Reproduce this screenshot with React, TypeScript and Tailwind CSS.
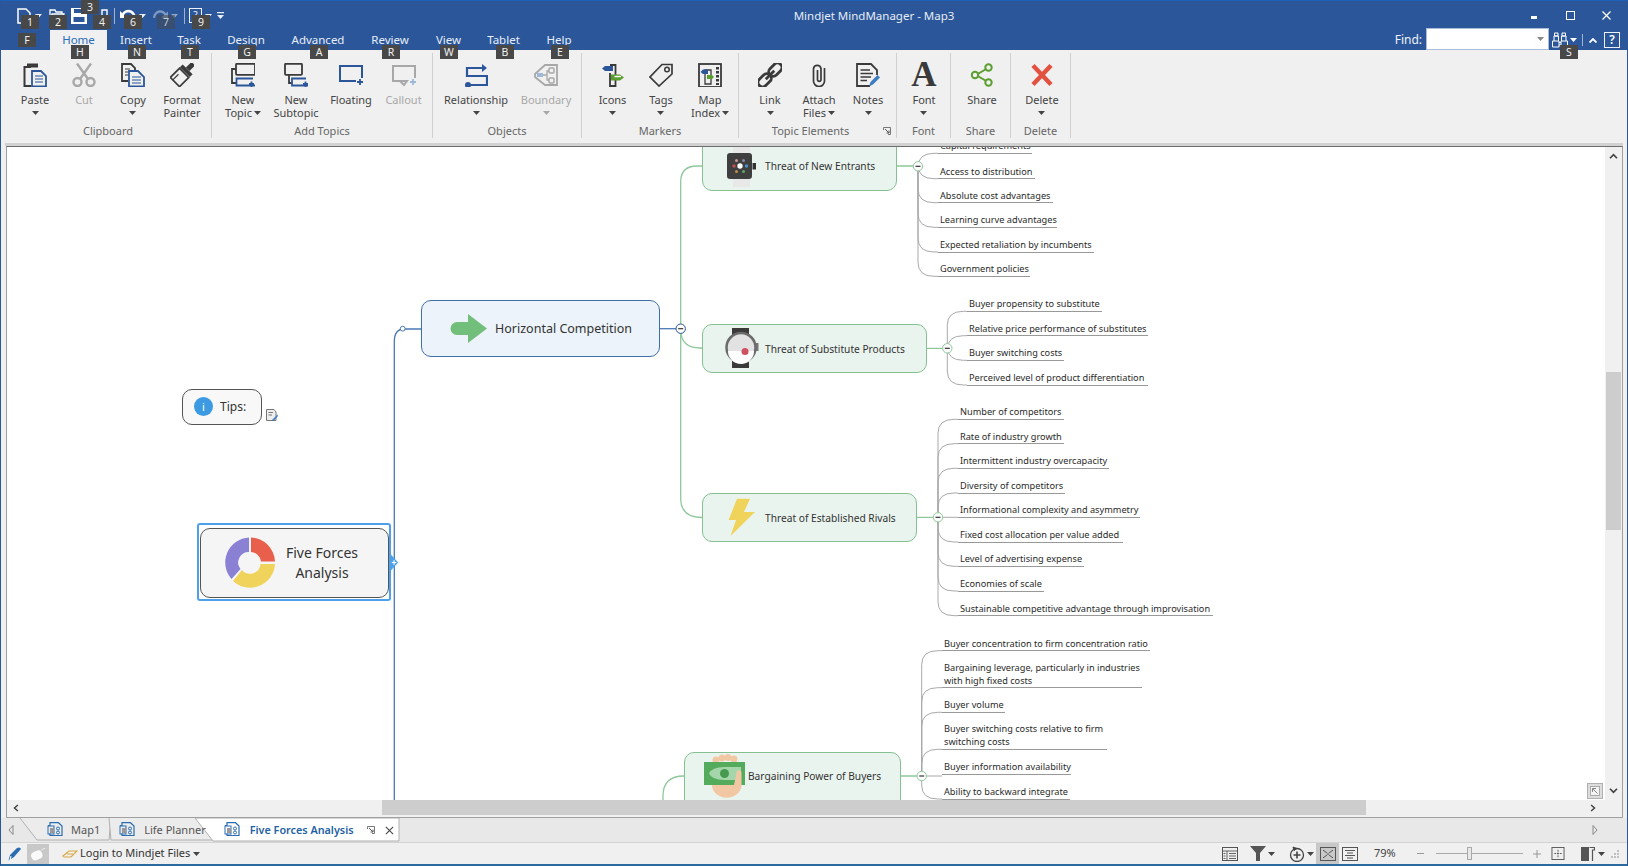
import React from "react";

const D = "#3a3a3a";
const B = "#2b579a";
const G = "#a8a8a8";

function Caret({ c = "#444", cls = "" }: { c?: string; cls?: string }) {
  return (
    <svg viewBox="0 0 7 4" className={"w-[7px] h-[4px] shrink-0 " + cls}>
      <polygon points="0,0 7,0 3.5,4" fill={c} />
    </svg>
  );
}

function Ic({ children, cls = "w-[24px] h-[24px]" }: { children: React.ReactNode; cls?: string }) {
  return (
    <svg viewBox="0 0 24 24" fill="none" className={cls}>
      {children}
    </svg>
  );
}

const icons: Record<string, React.ReactNode> = {
  paste: (
    <Ic>
      <path d="M8 4H1.5V23H8" stroke={D} strokeWidth="2" />
      <rect x="4" y="0.5" width="11" height="4" fill={D} />
      <path d="M9 8H18L23 13V23.5H9Z" stroke={B} strokeWidth="1.8" />
      <path d="M12 13H20M12 16H20M12 19H20" stroke={B} strokeWidth="1.2" />
    </Ic>
  ),
  cut: (
    <Ic>
      <circle cx="5.5" cy="19" r="4" stroke={G} strokeWidth="2.4" />
      <circle cx="18.5" cy="19" r="4" stroke={G} strokeWidth="2.4" />
      <path d="M8 16L19 0.5M16 16L5 0.5" stroke={G} strokeWidth="2.4" />
    </Ic>
  ),
  copy: (
    <Ic>
      <path d="M7 18H1V1H10L14 5V8" stroke={D} strokeWidth="1.8" />
      <path d="M4 6H9M4 9H7M4 12H7" stroke={D} strokeWidth="1.2" />
      <path d="M8 8H17L23 14V23.5H8Z" stroke={B} strokeWidth="1.8" />
      <path d="M11 14H20M11 17H20M11 20H20" stroke={B} strokeWidth="1.2" />
    </Ic>
  ),
  painter: (
    <Ic>
      <g transform="rotate(45 12 12)">
        <rect x="9.5" y="-4" width="5" height="8" fill={D} />
        <rect x="5" y="4" width="14" height="4" fill={D} />
        <rect x="5.5" y="9" width="13" height="13" stroke={D} strokeWidth="1.7" />
        <path d="M9 14V22" stroke={D} strokeWidth="1.2" />
      </g>
    </Ic>
  ),
  newTopic: (
    <Ic>
      <rect x="5" y="0.8" width="19" height="11" rx="1" stroke={D} strokeWidth="1.8" />
      <path d="M5 6H1V20H5" stroke={D} strokeWidth="1.8" />
      <path d="M24 22.5H5.5V15.5H22" stroke={B} strokeWidth="1.8" />
      <path d="M18 21H23M20.5 18.5V24" stroke={B} strokeWidth="1.8" />
    </Ic>
  ),
  newSub: (
    <Ic>
      <rect x="1" y="0.8" width="17" height="11" rx="1" stroke={D} strokeWidth="1.8" />
      <path d="M5 12V20H8" stroke={D} strokeWidth="1.8" />
      <path d="M24 22.5H8V15.5H22" stroke={B} strokeWidth="1.8" />
      <path d="M19 21H24M21.5 18.5V24" stroke={B} strokeWidth="1.8" />
    </Ic>
  ),
  floating: (
    <Ic>
      <path d="M23 15V3H1V18H17" stroke={B} strokeWidth="2" />
      <path d="M18 19H24M21 16V22" stroke={B} strokeWidth="1.8" />
    </Ic>
  ),
  callout: (
    <Ic>
      <path d="M23 15V3H1V18H15L12 22L8 18" stroke={G} strokeWidth="2" />
      <path d="M18 19H24M21 16V22" stroke="#9db8d8" strokeWidth="1.8" />
    </Ic>
  ),
  rel: (
    <Ic>
      <path d="M19 5H3V13H23V22H6" stroke={B} strokeWidth="2.2" />
      <path d="M18 1L23 5L18 9Z" fill={B} />
      <circle cx="4" cy="22" r="3" fill={B} />
    </Ic>
  ),
  boundary: (
    <Ic>
      <path d="M1 11L11 2H23V22H11L1 14Z" stroke={G} strokeWidth="1.8" />
      <rect x="15" y="5" width="5" height="5" rx="1" stroke={G} strokeWidth="1.5" />
      <rect x="15" y="15" width="5" height="5" rx="1" stroke={G} strokeWidth="1.5" />
      <rect x="3" y="10" width="6" height="4" fill="#9db8d8" />
      <path d="M9 12H13V8H15M13 12V17H15" stroke={G} strokeWidth="1.3" />
    </Ic>
  ),
  icons: (
    <Ic>
      <path d="M9 2H14.5V23H9V10" stroke={D} strokeWidth="1.8" />
      <path d="M1 5.5L4 3H12V8H4Z" fill={B} />
      <path d="M10 11.5H19L23 14.5L19 17.5H10Z" fill="#5a9e2f" />
      <path d="M13.5 13.5H20" stroke="#fff" strokeWidth="1.5" />
    </Ic>
  ),
  tags: (
    <Ic>
      <path d="M13 1.5H23V11L10 23L1 14Z" stroke={D} strokeWidth="1.7" />
      <circle cx="18" cy="6.5" r="2.3" stroke={D} strokeWidth="1.5" />
    </Ic>
  ),
  mapIndex: (
    <Ic>
      <rect x="1" y="1" width="22" height="23" stroke={D} strokeWidth="1.8" />
      <path d="M7 7H13V21H7Z" stroke={D} strokeWidth="1.3" />
      <path d="M2.5 9L5 6.5H10V11H5Z" fill={B} />
      <path d="M9 12H14L16 14L14 16H9Z" fill="#5a9e2f" />
      <path d="M19.5 4V22" stroke={D} strokeWidth="3" strokeDasharray="2.5 1.5" />
    </Ic>
  ),
  link: (
    <Ic>
      <g transform="rotate(-45 12 12)" stroke={D} strokeWidth="2.8">
        <rect x="-3" y="7.5" width="15" height="9" rx="4.5" />
        <rect x="12" y="7.5" width="15" height="9" rx="4.5" />
        <path d="M6 12H18" />
      </g>
    </Ic>
  ),
  attach: (
    <Ic>
      <path d="M17.5 5V18A5.5 5.5 0 0 1 6.5 18V5.5A3.8 3.8 0 0 1 14 5.5V17A1.8 1.8 0 0 1 10.5 17V7" stroke={D} strokeWidth="1.7" />
    </Ic>
  ),
  notes: (
    <Ic>
      <path d="M14 23H1V1H15L21 7V12" stroke={D} strokeWidth="1.8" />
      <path d="M4.5 7H14M4.5 10.5H17M4.5 14H15M4.5 17.5H11" stroke={D} strokeWidth="1.3" />
      <path d="M13 23.5L14.5 19L21.5 12L24 14.5L17 21.5Z" fill="#3f7cc0" />
    </Ic>
  ),
  share: (
    <Ic>
      <path d="M18 5L6 12L18 19" stroke="#5a9e2f" strokeWidth="2" />
      <circle cx="18.5" cy="4.5" r="3.2" fill="#f0f0f0" stroke="#5a9e2f" strokeWidth="2" />
      <circle cx="5" cy="12" r="3.2" fill="#f0f0f0" stroke="#5a9e2f" strokeWidth="2" />
      <circle cx="18.5" cy="19.5" r="3.2" fill="#f0f0f0" stroke="#5a9e2f" strokeWidth="2" />
    </Ic>
  ),
  del: (
    <Ic>
      <path d="M3 2.5L21 21.5M21 2.5L3 21.5" stroke="#e2513f" strokeWidth="4.4" />
    </Ic>
  ),
};

function RB({
  w,
  icon,
  lines,
  caret,
  off,
}: {
  w: string;
  icon: React.ReactNode;
  lines: string[];
  caret?: "below" | "inline";
  off?: boolean;
}) {
  const tc = off ? "text-[#a8a8a8]" : "text-[#444444]";
  return (
    <div className={"flex flex-col items-center " + w}>
      <div className="h-[26px] flex items-center justify-center">{icon}</div>
      <div className={"mt-[5px] text-center text-[11px] leading-[13px] whitespace-nowrap " + tc}>
        {lines.map((l, i) => (
          <div key={l} className="flex items-center justify-center gap-[2px]">
            {l}
            {caret === "inline" && i === lines.length - 1 && <Caret c={off ? G : "#444"} />}
          </div>
        ))}
        {caret === "below" && (
          <div className="h-[14px] flex items-center justify-center">
            <Caret c={off ? G : "#444"} />
          </div>
        )}
      </div>
    </div>
  );
}

function Group({
  w,
  pl,
  label,
  children,
  labelCls = "",
  launcher,
}: {
  w: string;
  pl: string;
  label: string;
  children: React.ReactNode;
  labelCls?: string;
  launcher?: boolean;
}) {
  return (
    <div className={"relative h-[85px] flex flex-col border-r border-[#d0d0d0] shrink-0 " + w}>
      <div className={"flex flex-1 pt-[9px] " + pl}>{children}</div>
      <div className={"h-[14px] text-center text-[11px] leading-[14px] text-[#666666] " + labelCls}>{label}</div>
      {launcher && (
        <svg viewBox="0 0 8 8" className="absolute right-[5px] bottom-[3px] w-[8px] h-[8px]" fill="none">
          <path d="M0.5 3V0.5H7.5V7.5H5" stroke="#777" />
          <path d="M2 2L6 6M6 3.5V6H3.5" stroke="#555" />
        </svg>
      )}
    </div>
  );
}

const tabs: [string, string][] = [
  ["Home", "w-[57px]"],
  ["Insert", "w-[58px]"],
  ["Task", "w-[48px]"],
  ["Design", "w-[66px]"],
  ["Advanced", "w-[78px]"],
  ["Review", "w-[66px]"],
  ["View", "w-[51px]"],
  ["Tablet", "w-[59px]"],
  ["Help", "w-[52px]"],
];

const keytips: [string, string][] = [
  ["1", "left-[20px] top-[15px]"],
  ["2", "left-[48px] top-[15px]"],
  ["3", "left-[80px] top-[0px]"],
  ["4", "left-[92px] top-[15px]"],
  ["6", "left-[123px] top-[15px]"],
  ["9", "left-[191px] top-[15px]"],
  ["F", "left-[17px] top-[33px]"],
  ["H", "left-[70px] top-[45px]"],
  ["N", "left-[127px] top-[45px]"],
  ["T", "left-[180px] top-[45px]"],
  ["G", "left-[237px] top-[45px]"],
  ["A", "left-[309px] top-[45px]"],
  ["R", "left-[381px] top-[45px]"],
  ["W", "left-[439px] top-[45px]"],
  ["B", "left-[495px] top-[45px]"],
  ["E", "left-[550px] top-[45px]"],
  ["S", "left-[1559px] top-[45px]"],
];

type Leaf = [string, number, number, boolean?];
type Branch = { bx: number; cy: number; start: number; items: Leaf[] };

const branches: Branch[] = [
  {
    bx: 918,
    cy: 166,
    start: 938,
    items: [
      ["Capital requirements", 153.3, 1032],
      ["Access to distribution", 178.7, 1035],
      ["Absolute cost advantages", 202.7, 1053],
      ["Learning curve advantages", 227.3, 1057],
      ["Expected retaliation by incumbents", 252, 1094],
      ["Government policies", 276.3, 1030],
    ],
  },
  {
    bx: 947.3,
    cy: 348.3,
    start: 967,
    items: [
      ["Buyer propensity to substitute", 311.3, 1102],
      ["Relative price performance of substitutes", 335.7, 1148],
      ["Buyer switching costs", 360.3, 1064],
      ["Perceived level of product differentiation", 385, 1148],
    ],
  },
  {
    bx: 938,
    cy: 517.3,
    start: 958,
    items: [
      ["Number of competitors", 419.3, 1064],
      ["Rate of industry growth", 443.7, 1064],
      ["Intermittent industry overcapacity", 468.3, 1109],
      ["Diversity of competitors", 493, 1065],
      ["Informational complexity and asymmetry", 517.3, 1140],
      ["Fixed cost allocation per value added", 542, 1122.5],
      ["Level of advertising expense", 566.3, 1084],
      ["Economies of scale", 591, 1044],
      ["Sustainable competitive advantage through improvisation", 615.7, 1212.5],
    ],
  },
  {
    bx: 921.7,
    cy: 776,
    start: 942,
    items: [
      ["Buyer concentration to firm concentration ratio", 650.7, 1150],
      ["Bargaining leverage, particularly in industries with high fixed costs", 687.7, 1142, true],
      ["Buyer volume", 712.3, 1005],
      ["Buyer switching costs relative to firm switching costs", 749.3, 1107, true],
      ["Buyer information availability", 774.3, 1071],
      ["Ability to backward integrate", 799, 1070],
    ],
  },
];

function branchPath(b: Branch, y: number) {
  const d = y - b.cy;
  if (Math.abs(d) < 4) return `M${b.bx} ${b.cy}H${b.start}`;
  const s = d < 0 ? 1 : -1;
  return `M${b.bx} ${b.cy}V${y + s * 14}Q${b.bx} ${y} ${b.bx + 16} ${y}H${b.start}`;
}

function Expander({ x, y, c }: { x: number; y: number; c: string }) {
  return (
    <g>
      <circle cx={x} cy={y} r="4.7" fill="#fff" stroke={c} strokeWidth="1" />
      <path d={`M${x - 2.5} ${y}H${x + 2.5}`} stroke="#333" strokeWidth="1.2" />
    </g>
  );
}

function Connectors() {
  const g = "#8fc79b";
  const gy = "#a9a9a9";
  return (
    <svg viewBox="0 0 1628 866" fill="none" className="absolute left-0 top-0 w-[1628px] h-[866px]">
      <path d="M394.3 866V342Q394.3 329 404 329H421" stroke="#4a7ab5" strokeWidth="1.3" />
      <circle cx="402.7" cy="328.7" r="2.4" fill="#fff" stroke="#4a7ab5" />
      <path d="M660 328.7H677" stroke="#4a7ab5" strokeWidth="1.3" />
      <path d="M702 166H697Q680.7 166 680.7 182V498Q680.7 517.5 702 517.5" stroke={g} strokeWidth="1.3" />
      <path d="M680.7 330Q681 348 700 348H702" stroke={g} strokeWidth="1.3" />
      <path d="M684 776Q663 776 663 796V866" stroke={g} strokeWidth="1.3" />
      <path d="M896 166H918M926 348.3H947M917 517.3H938M900 776H921" stroke={g} strokeWidth="1.3" />
      {branches.map((b) =>
        b.items.map((it) => <path key={it[0]} d={branchPath(b, it[1])} stroke={gy} strokeWidth="1" />)
      )}
      <Expander x={680.7} y={328.7} c="#2b579a" />
      <Expander x={918} y={166.3} c={g} />
      <Expander x={947.3} y={348.3} c={g} />
      <Expander x={938} y={517.3} c={g} />
      <Expander x={921.7} y={776} c={g} />
    </svg>
  );
}

function Leaves() {
  return (
    <>
      {branches.map((b) =>
        b.items.map((it) => {
          const two = it[3];
          return (
            <div
              key={it[0]}
              className="absolute border-b border-[#999999] pl-[2px] pt-[1px] text-[9.2px] leading-[13px] text-[#2a2a2a]"
              style={{ left: b.start, top: it[1] - (two ? 28 : 15), width: it[2] - b.start, height: two ? 28.5 : 15.5 }}
            >
              {it[0]}
            </div>
          );
        })
      )}
    </>
  );
}

function Topic({ cls, text, textCls, children }: { cls: string; text: string; textCls: string; children?: React.ReactNode }) {
  return (
    <div className={"absolute rounded-[10px] border " + cls}>
      {children}
      <div className={"absolute whitespace-nowrap text-[#333333] " + textCls}>{text}</div>
    </div>
  );
}

function MapIcons() {
  return (
    <svg viewBox="0 0 1628 866" className="absolute left-0 top-0 w-[1628px] h-[866px]">
      {/* green arrow */}
      <path d="M457 322H468V314L487 328.5L468 343V335H457A6.5 6.5 0 0 1 457 322Z" fill="#72bf7c" />
      {/* donut */}
      <path d="M251 537.5A25 25 0 0 1 275 561.5H261A10.5 10.5 0 0 0 251 552Z" fill="#e8604c" />
      <path d="M275 564A25 25 0 0 1 233 581L242 570A10.5 10.5 0 0 0 260.5 564Z" fill="#f0d35a" />
      <path d="M249 537.5V552A10.5 10.5 0 0 0 240.5 569L231.5 579A25 25 0 0 1 249 537.5Z" fill="#8a80d4" />
      {/* smart watch */}
      <rect x="733" y="146" width="17" height="41" fill="#e8e8e8" />
      <rect x="727" y="153" width="25" height="26" rx="3" fill="#3f3f3f" />
      <rect x="752.5" y="163" width="3.5" height="6.5" fill="#333" />
      <circle cx="736.5" cy="160.5" r="1.5" fill="#c99" />
      <circle cx="743.5" cy="160.5" r="1.5" fill="#88a" />
      <circle cx="746.5" cy="166" r="1.7" fill="#4a90d0" />
      <circle cx="734" cy="166" r="1.7" fill="#c05050" />
      <circle cx="736.5" cy="171.5" r="1.5" fill="#c09040" />
      <circle cx="743.5" cy="171.5" r="1.5" fill="#60a860" />
      <circle cx="740" cy="166" r="2.7" fill="#fff" />
      {/* round watch */}
      <rect x="732" y="328" width="17" height="40" fill="#3a3a3a" />
      <rect x="755" y="343" width="3.5" height="8" fill="#777" />
      <circle cx="741" cy="347.5" r="14.5" fill="#e2e2e2" stroke="#6b6b6b" strokeWidth="2.5" />
      <path d="M728 351H754A13 13 0 0 1 728 351Z" fill="#fff" />
      <circle cx="745" cy="351.5" r="3.5" fill="#cf5060" />
      {/* bolt */}
      <path d="M737 498.7H750L744 512H755L730.5 536L736 520H728.6Z" fill="#f0d35a" />
      {/* money + hand */}
      <circle cx="716" cy="760" r="3.5" fill="#f2c8a4" />
      <circle cx="722" cy="758" r="3.5" fill="#f2c8a4" />
      <circle cx="728" cy="757.5" r="3.5" fill="#f2c8a4" />
      <circle cx="734" cy="759" r="3.5" fill="#f2c8a4" />
      <rect x="704" y="762" width="41" height="23" fill="#55ab5c" />
      <path d="M709 773.5Q712 767 724 767H741V780H724Q712 780 709 773.5Z" fill="#a5d6ab" />
      <circle cx="724.5" cy="773.5" r="4.5" fill="#469a4e" />
      <path d="M712 785H734L737 771A2.6 2.6 0 0 1 741.5 772V785A14 12 0 0 1 712 785Z" fill="#f2c8a4" />
      {/* note */}
      <path d="M266.5 409.5H274L276 412V420.5H266.5Z" fill="#eee" stroke="#777" />
      <path d="M268.5 412.5H273M268.5 415H272" stroke="#777" />
      <path d="M272 420L277.5 414.5L278 416L273.5 421Z" fill="#3f7cc0" />
    </svg>
  );
}

function Canvas() {
  return (
    <div className="relative flex-1 bg-white overflow-hidden">
      <div className="absolute left-[-7px] top-[-147px] w-[1628px] h-[866px]">
        <Connectors />
        <Leaves />
        <Topic
          cls="left-[421px] top-[300px] w-[239px] h-[57px] bg-[#edf3fa] border-[#3f6fa8]"
          text="Horizontal Competition"
          textCls="left-[73px] top-[18px] text-[12.5px] leading-[20px]"
        />
        <Topic
          cls="left-[702px] top-[136px] w-[195px] h-[55px] bg-[#eaf4ee] border-[#84c090]"
          text="Threat of New Entrants"
          textCls="left-[62px] top-[21px] text-[10.2px] leading-[16px]"
        />
        <Topic
          cls="left-[702px] top-[324px] w-[225px] h-[49px] bg-[#eaf4ee] border-[#84c090]"
          text="Threat of Substitute Products"
          textCls="left-[62px] top-[16px] text-[10.2px] leading-[16px]"
        />
        <Topic
          cls="left-[702px] top-[493px] w-[215px] h-[49px] bg-[#eaf4ee] border-[#84c090]"
          text="Threat of Established Rivals"
          textCls="left-[62px] top-[16px] text-[10.2px] leading-[16px]"
        />
        <Topic
          cls="left-[684px] top-[752px] w-[217px] h-[60px] bg-[#eaf4ee] border-[#84c090]"
          text="Bargaining Power of Buyers"
          textCls="left-[63px] top-[15px] text-[10.2px] leading-[16px]"
        />
        <Topic
          cls="left-[182px] top-[389px] w-[80px] h-[36px] bg-[#f8f8f8] border-[#555555] rounded-[6px]"
          text="Tips:"
          textCls="left-[37px] top-[8px] text-[12px] leading-[18px]"
        />
        <div className="absolute left-[194px] top-[397px] w-[19px] h-[19px] rounded-full bg-[#3b9ae1] text-white text-[11px] leading-[19px] text-center">
          i
        </div>
        <div className="absolute left-[197px] top-[523px] w-[194px] h-[78px] border-[2.5px] border-[#4ea1e8] rounded-[3px]" />
        <div className="absolute left-[200px] top-[528px] w-[189px] h-[70px] rounded-[10px] border border-[#555555] bg-[#f5f5f5]">
          <div className="absolute left-[76px] top-[14px] w-[90px] text-center text-[14px] leading-[20px] text-[#333333]">
            Five Forces Analysis
          </div>
        </div>
        <svg viewBox="0 0 10 18" className="absolute left-[390px] top-[554px] w-[9px] h-[17px]">
          <path d="M1 0L9 9L1 18Z" fill="#4ea1e8" />
          <path d="M2 9H7M4.5 6.5V11.5" stroke="#fff" strokeWidth="1.3" />
        </svg>
        <MapIcons />
      </div>
      <div className="absolute right-[2px] bottom-[1px] w-[16px] h-[16px] border border-[#b0b0b0] bg-[#dddddd] p-[2px]">
        <div className="w-full h-full bg-[#f4f4f4] border border-[#aaaaaa] flex items-center justify-center">
          <svg viewBox="0 0 6 6" className="w-[6px] h-[6px]" fill="none">
            <path d="M0.5 4V0.5H4M0.5 0.5L5.5 5.5" stroke="#888" />
          </svg>
        </div>
      </div>
    </div>
  );
}

function Chev({ d, cls = "" }: { d: string; cls?: string }) {
  return (
    <svg viewBox="0 0 10 8" className={"w-[9px] h-[7px] " + cls} fill="none">
      <path d={d} stroke="#444" strokeWidth="2" />
    </svg>
  );
}

function TabDoc({ cls }: { cls: string }) {
  return (
    <svg viewBox="0 0 16 16" className={"w-[16px] h-[16px] " + cls} fill="none">
      <path d="M1 3.5H3V0.7H11.5L15 4V13.5H3V11.5" stroke="#2b6cb0" strokeWidth="1.2" />
      <rect x="1" y="4" width="6" height="8" stroke="#2b6cb0" />
      <rect x="3" y="6" width="4" height="5" fill="#999" />
      <circle cx="11" cy="6.5" r="1.5" stroke="#2b6cb0" />
      <circle cx="11" cy="10.5" r="1.5" stroke="#2b6cb0" />
    </svg>
  );
}

function Tabs() {
  return (
    <div className="relative h-[24px] bg-[#e8e8e8] flex items-center text-[11px] shrink-0">
      <svg viewBox="0 0 400 24" fill="none" className="absolute left-0 top-0 w-[400px] h-[24px]">
        <path d="M19 0L36 22H108L110 0" fill="#ececec" stroke="#b0b0b0" />
        <path d="M108 0L110 22H214L196 0" fill="#ececec" stroke="#b0b0b0" />
        <path d="M194 0L212 23H398V0Z" fill="#ffffff" stroke="#b0b0b0" />
      </svg>
      <svg viewBox="0 0 6 10" className="relative ml-[7px] w-[6px] h-[10px]" fill="none">
        <path d="M5 0.5L1 5L5 9.5Z" stroke="#888" />
      </svg>
      <TabDoc cls="relative ml-[33px]" />
      <span className="relative ml-[8px] text-[#555555]">Map1</span>
      <TabDoc cls="relative ml-[19px]" />
      <span className="relative ml-[9px] text-[#555555]">Life Planner</span>
      <TabDoc cls="relative ml-[18px]" />
      <span className="relative ml-[10px] font-semibold text-[#1f5fa6] text-[10.8px]">Five Forces Analysis</span>
      <svg viewBox="0 0 8 8" className="relative ml-[13px] w-[8px] h-[8px]" fill="none">
        <path d="M0.5 3V0.5H7.5V7.5H5" stroke="#777" />
        <path d="M2 2L6 6M6 3.5V6H3.5" stroke="#555" />
      </svg>
      <svg viewBox="0 0 10 10" className="relative ml-[10px] w-[9px] h-[9px]" fill="none">
        <path d="M1 1L9 9M9 1L1 9" stroke="#444" strokeWidth="1.2" />
      </svg>
      <svg viewBox="0 0 6 10" className="absolute left-[1591px] top-[7px] w-[6px] h-[10px]" fill="none">
        <path d="M1 0.5L5 5L1 9.5Z" stroke="#888" />
      </svg>
    </div>
  );
}

function StatusBar() {
  return (
    <div className="h-[22px] bg-[#f0f0f0] border-t border-[#d4d4d4] flex items-center text-[11px] text-[#333333] shrink-0">
      <svg viewBox="0 0 14 14" className="ml-[7px] w-[14px] h-[14px]">
        <path d="M0.5 13.5L2 8L9 1Q12 -0.5 13 2L6 10Z" fill="#2b6cb0" />
        <path d="M2 13L3 9" stroke="#fff" />
      </svg>
      <div className="ml-[5px] w-[22px] h-[20px] bg-[#c8c8c8] flex items-center justify-center">
        <svg viewBox="0 0 18 14" className="w-[17px] h-[14px]">
          <rect x="1" y="4" width="12" height="9" rx="4" transform="rotate(-25 7 8)" fill="#fafafa" />
          <path d="M12 3Q14 1 16 1" stroke="#eee" fill="none" />
        </svg>
      </div>
      <svg viewBox="0 0 16 8" className="ml-[13px] w-[16px] h-[8px]" fill="none">
        <path d="M1 6L7 1H15L9 7H2Z" stroke="#d8a840" strokeWidth="1.2" />
        <path d="M5 4H11" stroke="#d8a840" />
      </svg>
      <span className="ml-[2px]">Login to Mindjet Files</span>
      <Caret cls="ml-[3px]" />
      <div className="ml-auto flex items-center h-full">
        <svg viewBox="0 0 16 14" className="w-[16px] h-[14px]" fill="none" stroke="#555">
          <rect x="0.5" y="0.5" width="15" height="13" />
          <path d="M0.5 4H15.5M5 4V13.5M7 6.5H14M7 9H14M7 11.5H14M1.5 6.5H3.5M1.5 9H3.5M1.5 11.5H3.5" strokeWidth="0.9" />
        </svg>
        <svg viewBox="0 0 16 15" className="ml-[12px] w-[16px] h-[15px]">
          <path d="M0 0H16L10 7V15H6V7Z" fill="#555" />
        </svg>
        <Caret cls="ml-[2px]" />
        <svg viewBox="0 0 16 16" className="ml-[14px] w-[16px] h-[16px]" fill="none" stroke="#444">
          <circle cx="8" cy="9" r="6.5" strokeWidth="1.3" />
          <path d="M8 5.5V12.5M4.5 9H11.5" strokeWidth="1.6" />
          <path d="M4 1L8 2.5L5 4.5Z" fill="#444" />
        </svg>
        <Caret cls="ml-[2px]" />
        <div className="ml-[2px] w-[23px] h-[21px] bg-[#c8c8c8] flex items-center justify-center">
          <svg viewBox="0 0 16 14" className="w-[16px] h-[14px]" fill="none" stroke="#555">
            <rect x="0.5" y="0.5" width="15" height="13" />
            <path d="M3 3L7 6M13 3L9 6M3 11L7 8M13 11L9 8M7 7H9" />
          </svg>
        </div>
        <svg viewBox="0 0 16 14" className="ml-[3px] w-[16px] h-[14px]" fill="none" stroke="#555">
          <rect x="0.5" y="0.5" width="15" height="13" />
          <path d="M3 3.5H13M5 6H11M3 8.5H13M5 11H11" />
        </svg>
        <span className="ml-[16px] w-[21px] text-[#444444]">79%</span>
        <div className="ml-[22px] w-[7px] h-[1px] bg-[#999999]" />
        <div className="relative ml-[12px] w-[87px] h-[1px] bg-[#aaaaaa]">
          <div className="absolute left-[31px] top-[-6px] w-[5px] h-[13px] bg-[#e8e8e8] border border-[#aaaaaa]" />
        </div>
        <svg viewBox="0 0 8 8" className="ml-[10px] w-[8px] h-[8px]" stroke="#999">
          <path d="M0 4H8M4 0V8" />
        </svg>
        <svg viewBox="0 0 14 14" className="ml-[10px] w-[14px] h-[13px]" fill="none" stroke="#555">
          <rect x="0.5" y="0.5" width="13" height="13" />
          <path d="M7 3V11M3 7H11" strokeDasharray="2 1" />
        </svg>
        <svg viewBox="0 0 14 14" className="ml-[16px] w-[14px] h-[14px]">
          <rect x="0" y="0" width="8" height="14" fill="#555" />
          <path d="M8.5 0.5H13.5V3H11.5V14" fill="none" stroke="#555" strokeWidth="1.2" />
        </svg>
        <Caret cls="ml-[3px]" />
        <svg viewBox="0 0 8 8" className="ml-[6px] mr-[8px] w-[8px] h-[8px]">
          <path d="M6 0h2v2H6zM3 3h2v2H3zM6 3h2v2H6zM0 6h2v2H0zM3 6h2v2H3zM6 6h2v2H6z" fill="#c0c0c0" />
        </svg>
      </div>
    </div>
  );
}

export default function App() {
  return (
    <div className="relative w-[1628px] h-[866px] overflow-hidden bg-[#f0f0f0] flex flex-col font-['Noto_Sans',sans-serif] border-x-[1px] border-x-[#2b579a]">
      {/* title bar */}
      <div className="h-[50px] bg-[#2b579a] border-t-[1px] border-t-[#1b62b8] shrink-0 text-[#eef2f8]">
        <div className="h-[29px] flex items-center pl-[16px]">
          <svg viewBox="0 0 14 16" className="w-[14px] h-[16px]" fill="none">
            <path d="M1 1H9L13 5V15H1Z" stroke="#fff" strokeWidth="1.5" />
          </svg>
          <Caret c="#e8eef7" cls="ml-[4px]" />
          <svg viewBox="0 0 16 14" className="ml-[7px] w-[16px] h-[14px]" fill="none">
            <path d="M1 13V1H6L7 3H13V5M1 13L3 5H15L13 13Z" stroke="#fff" strokeWidth="1.3" />
          </svg>
          <svg viewBox="0 0 16 16" className="ml-[6px] w-[16px] h-[16px]">
            <path d="M0 0H13L16 3V16H0Z" fill="#fff" />
            <rect x="3" y="1" width="8" height="4" fill="#2b579a" />
            <rect x="2.5" y="9" width="11" height="5" fill="#2b579a" />
          </svg>
          <svg viewBox="0 0 15 14" className="ml-[6px] w-[15px] h-[14px]" fill="none">
            <path d="M9 8V1H14V8M1 8H14V12" stroke="#fff" strokeWidth="1.4" />
          </svg>
          <div className="ml-[6px] w-[1px] h-[16px] bg-[#9db3d2]" />
          <svg viewBox="0 0 16 13" className="ml-[5px] w-[16px] h-[13px]" fill="none">
            <path d="M2 7Q4 2 9 2Q14 3 15 9" stroke="#fff" strokeWidth="2.4" />
            <path d="M0 2V9H7Z" fill="#fff" />
          </svg>
          <Caret c="#e8eef7" cls="ml-[3px]" />
          <svg viewBox="0 0 16 13" className="ml-[7px] w-[15px] h-[13px]" fill="none">
            <path d="M14 7Q12 2 7 2Q2 3 1 9" stroke="#7f98bf" strokeWidth="2.4" />
            <path d="M16 2V9H9Z" fill="#7f98bf" />
          </svg>
          <Caret c="#8fa6c8" cls="ml-[3px]" />
          <div className="ml-[6px] w-[1px] h-[16px] bg-[#9db3d2]" />
          <div className="ml-[4px] w-[13px] h-[15px] border border-[#eef2f8] text-[10px] leading-[13px] text-center">?</div>
          <Caret c="#e8eef7" cls="ml-[3px]" />
          <svg viewBox="0 0 7 7" className="ml-[5px] w-[7px] h-[7px]">
            <path d="M0 0H7V1.2H0ZM0 3H7L3.5 7Z" fill="#e8eef7" />
          </svg>
          <div className="flex-1 text-center text-[11.5px] text-[#e6ecf5] pl-[5px]">Mindjet MindManager - Map3</div>
          <div className="w-[108px] flex items-center pl-[12px]">
            <div className="w-[6px] h-[3px] bg-white mt-[3px]" />
            <div className="ml-[29px] w-[9px] h-[9px] border-[1.5px] border-white" />
            <svg viewBox="0 0 9 9" className="ml-[27px] w-[9px] h-[9px]" fill="none">
              <path d="M0.5 0.5L8.5 8.5M8.5 0.5L0.5 8.5" stroke="#fff" strokeWidth="1.3" />
            </svg>
          </div>
        </div>
        <div className="h-[20px] flex items-stretch pl-[49px] relative">
          {tabs.map(([t, w]) => (
            <div
              key={t}
              className={
                "flex items-center justify-center text-[11.5px] " +
                w +
                (t === "Home" ? " bg-[#f0f0f0] text-[#2b6cb8]" : " text-[#e8eef7]")
              }
            >
              {t}
            </div>
          ))}
          <div className="ml-auto flex items-center pr-[7px]">
            <span className="text-[12px] text-[#eef2f8] mr-[4px]">Find:</span>
            <div className="w-[123px] h-[22px] bg-white border border-[#a9bcd8] flex items-center justify-end pr-[4px] mt-[-3px]">
              <Caret c="#888" />
            </div>
            <svg viewBox="0 0 16 16" className="ml-[3px] w-[16px] h-[16px]" fill="none" stroke="#fff">
              <path d="M2.5 1H6V4H2.5ZM10 1H13.5V4H10ZM2 4H6.5V9M9.5 9V4H14M0.5 9H7V15H0.5ZM9 9H15.5V15H9ZM7 10.5H9M7 13H9M2 4V9M14 4V9" />
            </svg>
            <Caret c="#fff" cls="ml-[2px]" />
            <div className="ml-[5px] w-[1px] h-[12px] bg-[#9db3d2]" />
            <svg viewBox="0 0 8 5" className="ml-[6px] w-[8px] h-[5px]" fill="none">
              <path d="M0.5 4.5L4 1L7.5 4.5" stroke="#fff" strokeWidth="1.8" />
            </svg>
            <div className="ml-[7px] w-[16px] h-[16px] border border-[#eef2f8] text-[12px] leading-[14px] text-center font-semibold text-white">?</div>
          </div>
        </div>
      </div>

      {/* ribbon */}
      <div className="h-[93px] shrink-0 flex pt-[3px] pl-[4px] bg-[#f0f0f0]">
        <Group w="w-[207px]" pl="pl-[5px]" label="Clipboard">
          <RB w="w-[50px]" icon={icons.paste} lines={["Paste"]} caret="below" />
          <RB w="w-[48px]" icon={icons.cut} lines={["Cut"]} off />
          <RB w="w-[50px]" icon={icons.copy} lines={["Copy"]} caret="below" />
          <RB w="w-[48px]" icon={icons.painter} lines={["Format", "Painter"]} />
        </Group>
        <Group w="w-[221px]" pl="pl-[5px]" label="Add Topics">
          <RB w="w-[52px]" icon={icons.newTopic} lines={["New", "Topic"]} caret="inline" />
          <RB w="w-[54px]" icon={icons.newSub} lines={["New", "Subtopic"]} />
          <RB w="w-[56px]" icon={icons.floating} lines={["Floating"]} />
          <RB w="w-[49px]" icon={icons.callout} lines={["Callout"]} off />
        </Group>
        <Group w="w-[149px]" pl="pl-[5px]" label="Objects">
          <RB w="w-[76px]" icon={icons.rel} lines={["Relationship"]} caret="below" />
          <RB w="w-[64px]" icon={icons.boundary} lines={["Boundary"]} caret="below" off />
        </Group>
        <Group w="w-[157px]" pl="pl-[5px]" label="Markers">
          <RB w="w-[51px]" icon={icons.icons} lines={["Icons"]} caret="below" />
          <RB w="w-[46px]" icon={icons.tags} lines={["Tags"]} caret="below" />
          <RB w="w-[52px]" icon={icons.mapIndex} lines={["Map", "Index"]} caret="inline" />
        </Group>
        <Group w="w-[158px]" pl="pl-[5px]" label="Topic Elements" labelCls="pr-[14px]" launcher>
          <RB w="w-[52px]" icon={icons.link} lines={["Link"]} caret="below" />
          <RB w="w-[46px]" icon={icons.attach} lines={["Attach", "Files"]} caret="inline" />
          <RB w="w-[52px]" icon={icons.notes} lines={["Notes"]} caret="below" />
        </Group>
        <Group w="w-[54px]" pl="pl-[2px]" label="Font">
          <RB
            w="w-[50px]"
            icon={<span className="font-['Liberation_Serif',serif] font-bold text-[35px] leading-[26px] text-[#3a3a3a]">A</span>}
            lines={["Font"]}
            caret="below"
          />
        </Group>
        <Group w="w-[60px]" pl="pl-[5px]" label="Share">
          <RB w="w-[52px]" icon={icons.share} lines={["Share"]} />
        </Group>
        <Group w="w-[60px]" pl="pl-[5px]" label="Delete">
          <RB w="w-[52px]" icon={icons.del} lines={["Delete"]} caret="below" />
        </Group>
      </div>

      {/* map frame */}
      <div className="h-[3px] shrink-0 bg-[#d2d2d2] mx-[4px]" />
      <div className="flex-1 min-h-0 flex flex-col ml-[5px] mr-[4px] border-x border-b border-[#a0a0a0] border-t-[1px] border-t-[#6e6e6e]">
        <div className="flex-1 min-h-0 flex">
          <Canvas />
          <div className="relative w-[17px] bg-[#f0f0f0] shrink-0">
            <Chev d="M1 6L5 2L9 6" cls="absolute left-[4px] top-[6px]" />
            <div className="absolute left-[1px] top-[225px] w-[15px] h-[158px] bg-[#cdcdcd]" />
            <Chev d="M1 2L5 6L9 2" cls="absolute left-[4px] top-[640px]" />
          </div>
        </div>
        <div className="h-[17px] shrink-0 bg-[#f0f0f0] relative">
          <div className="h-[15px] flex items-center pl-[6px]">
            <svg viewBox="0 0 8 10" className="w-[6px] h-[8px]" fill="none">
              <path d="M6.5 1L2 5L6.5 9" stroke="#444" strokeWidth="2" />
            </svg>
            <div className="ml-[363px] w-[984px] h-[15px] bg-[#cdcdcd]" />
            <svg viewBox="0 0 8 10" className="ml-[224px] w-[6px] h-[8px]" fill="none">
              <path d="M1.5 1L6 5L1.5 9" stroke="#444" strokeWidth="2" />
            </svg>
          </div>
        </div>
      </div>

      <Tabs />
      <StatusBar />
      <div className="h-[2px] shrink-0 bg-[#2b6a9e]" />

      {/* key tips */}
      {keytips.map(([k, pos]) => (
        <div
          key={k}
          className={
            "absolute h-[14px] w-[18px] bg-[#484848] text-[#f0f0f0] text-[10.5px] leading-[14px] text-center " + pos
          }
        >
          {k}
        </div>
      ))}
      <div className="absolute left-[156px] top-[15px] h-[14px] w-[18px] bg-[#484848]/50 text-[#c8d0dc] text-[10.5px] leading-[14px] text-center">
        7
      </div>
    </div>
  );
}
